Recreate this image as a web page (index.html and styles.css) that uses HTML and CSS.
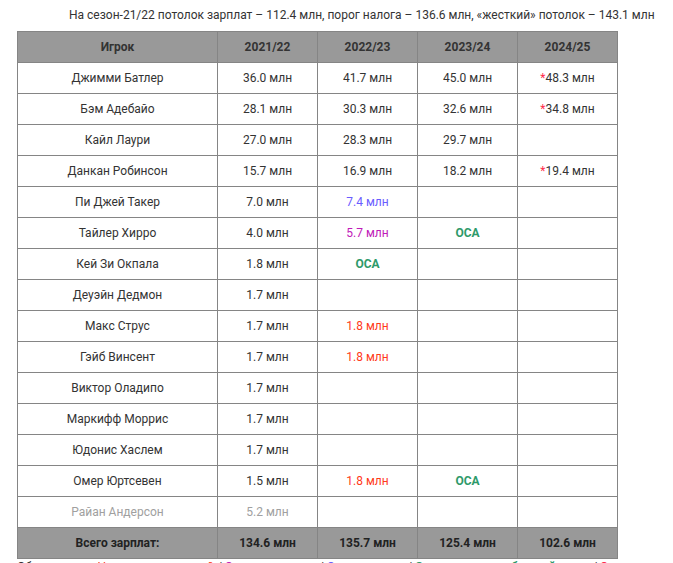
FILE: index.html
```html
<!DOCTYPE html>
<html lang="ru">
<head>
<meta charset="utf-8">
<link rel="stylesheet" href="styles.css">
</head>
<body>
<div class="page">
  <p class="note">На сезон-21/22 потолок зарплат – 112.4 млн, порог налога – 136.6 млн, «жесткий» потолок – 143.1 млн</p>
  <table class="salary">
    <colgroup><col class="c-name"><col class="c-year"><col class="c-year"><col class="c-year"><col class="c-year"></colgroup>
    <thead>
      <tr><th>Игрок</th><th>2021/22</th><th>2022/23</th><th>2023/24</th><th>2024/25</th></tr>
    </thead>
    <tbody>
      <tr><td>Джимми Батлер</td><td>36.0 млн</td><td>41.7 млн</td><td>45.0 млн</td><td><span class="ast">*</span>48.3 млн</td></tr>
      <tr><td>Бэм Адебайо</td><td>28.1 млн</td><td>30.3 млн</td><td>32.6 млн</td><td><span class="ast">*</span>34.8 млн</td></tr>
      <tr><td>Кайл Лаури</td><td>27.0 млн</td><td>28.3 млн</td><td>29.7 млн</td><td></td></tr>
      <tr><td>Данкан Робинсон</td><td>15.7 млн</td><td>16.9 млн</td><td>18.2 млн</td><td><span class="ast">*</span>19.4 млн</td></tr>
      <tr><td>Пи Джей Такер</td><td>7.0 млн</td><td class="player-opt">7.4 млн</td><td></td><td></td></tr>
      <tr><td>Тайлер Хирро</td><td>4.0 млн</td><td class="team-opt">5.7 млн</td><td class="rfa">ОСА</td><td></td></tr>
      <tr><td>Кей Зи Окпала</td><td>1.8 млн</td><td class="rfa">ОСА</td><td></td><td></td></tr>
      <tr><td>Деуэйн Дедмон</td><td>1.7 млн</td><td></td><td></td><td></td></tr>
      <tr><td>Макс Струс</td><td>1.7 млн</td><td class="nongtd">1.8 млн</td><td></td><td></td></tr>
      <tr><td>Гэйб Винсент</td><td>1.7 млн</td><td class="nongtd">1.8 млн</td><td></td><td></td></tr>
      <tr><td>Виктор Оладипо</td><td>1.7 млн</td><td></td><td></td><td></td></tr>
      <tr><td>Маркифф Моррис</td><td>1.7 млн</td><td></td><td></td><td></td></tr>
      <tr><td>Юдонис Хаслем</td><td>1.7 млн</td><td></td><td></td><td></td></tr>
      <tr><td>Омер Юртсевен</td><td>1.5 млн</td><td class="nongtd">1.8 млн</td><td class="rfa">ОСА</td><td></td></tr>
      <tr class="dead"><td>Райан Андерсон</td><td>5.2 млн</td><td></td><td></td><td></td></tr>
    </tbody>
    <tfoot>
      <tr><td>Всего зарплат:</td><td>134.6 млн</td><td>135.7 млн</td><td>125.4 млн</td><td>102.6 млн</td></tr>
    </tfoot>
  </table>
  <p class="legend">Обозначения: <span class="nongtd">Негарантированный</span> / <span class="team-opt">Опция команды</span> / <span class="player-opt">Опция игрока</span> / <span class="rfa">Ограниченно свободный агент</span> / <span class="ast">Опция</span></p>
</div>
</body>
</html>
```

FILE: styles.css
```css
html, body {
  margin: 0;
  padding: 0;
  background: #ffffff;
}

.page {
  padding: 8px 0 0 17px;
  font-family: Roboto, "Liberation Sans", sans-serif;
  font-size: 12px;
  color: #333333;
}

.note {
  margin: 0 0 8px 52px;
  line-height: 15px;
  white-space: nowrap;
  color: #333333;
}

.salary {
  border-collapse: collapse;
  table-layout: fixed;
  width: 601px;
}

.c-name { width: 200px; }
.c-year { width: 100px; }

.salary th,
.salary td {
  border: 1px solid #858585;
  height: 30px;
  padding: 0;
  text-align: center;
  vertical-align: middle;
  line-height: 15px;
}

.salary thead th {
  background: #999999;
  font-weight: bold;
  color: #333333;
}

.salary tfoot td {
  background: #999999;
  font-weight: bold;
  color: #222222;
}

.ast { color: #ff2a4a; }
.player-opt { color: #6a5cff; }
.team-opt { color: #c019b8; }
.nongtd { color: #ff3a1a; }
.rfa { color: #2e9a6a; font-weight: bold; }
.salary td.rfa { color: #2e9a6a; }
.dead td { color: #a0a0a0; }

.legend {
  margin: 1px 0 0 0;
  line-height: 15px;
  white-space: nowrap;
}
```
